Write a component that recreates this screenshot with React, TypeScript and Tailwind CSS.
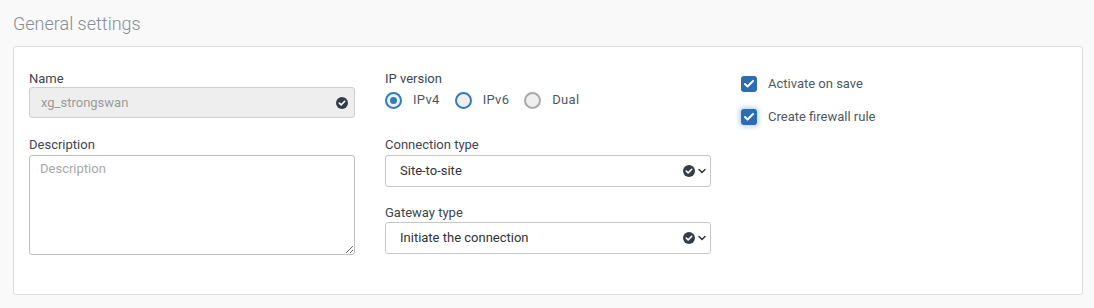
import { Check, ChevronDown } from 'lucide-react';

const font = { fontFamily: 'Roboto, "Liberation Sans", sans-serif' };

function CheckCircle() {
  return (
    <svg width="12" height="12" viewBox="0 0 12 12">
      <circle cx="6" cy="6" r="6" fill="#333d47" />
      <path d="M3.3 6.1 L5.2 7.9 L8.7 4.3" stroke="#fff" strokeWidth="1.6" fill="none" strokeLinecap="round" strokeLinejoin="round" />
    </svg>
  );
}

function Radio({ label, checked, focused }: { label: string; checked?: boolean; focused?: boolean }) {
  const ring = checked || focused ? 'border-[#2d7cc1]' : 'border-[#a9a9a9]';
  return (
    <label className="flex items-center gap-[11px] mr-[15px]">
      <span className={`w-[17px] h-[17px] rounded-full border-2 ${ring} bg-[#efefef] flex items-center justify-center`}>
        {checked && <span className="w-[7px] h-[7px] rounded-full bg-[#2d7cc1]" />}
      </span>
      <span className="text-[13px] tracking-[0.3px] text-[#4f5862]">{label}</span>
    </label>
  );
}

function Checkbox({ label, glow }: { label: string; glow?: boolean }) {
  return (
    <label className="flex items-center gap-[11px] h-[16px]">
      <span
        className={`w-[16px] h-[16px] rounded-[3px] bg-[#2a6db3] flex items-center justify-center ${glow ? 'shadow-[0_0_4px_2px_rgba(70,140,220,0.35)]' : ''}`}
      >
        <Check size={12} strokeWidth={4} color="#fff" />
      </span>
      <span className="text-[13px] text-[#4f5862]">{label}</span>
    </label>
  );
}

function Select({ value }: { value: string }) {
  return (
    <div className="h-[32px] w-full border border-[#c6c6c6] rounded-[3px] bg-white flex items-center pl-[14px] pr-[2px]">
      <span className="flex-1 text-[13px] text-[#333]">{value}</span>
      <CheckCircle />
      <ChevronDown size={12} strokeWidth={3.2} color="#333d47" className="ml-[1px]" />
    </div>
  );
}

export default function App() {
  return (
    <div className="w-[1094px] h-[308px] bg-[#f9f9f9] px-[13px] pt-[12px]" style={font}>
      <h2 className="text-[18px] leading-[24px] font-light text-[#868d95] mb-[10px]">General settings</h2>
      <div className="w-[1070px] bg-white border border-[#dcdcdc] rounded-[3px] pt-[23px] pb-[39px] px-[15px] flex gap-[30px]">
        <div className="w-[326px] flex flex-col">
          <div className="text-[13px] leading-[16px] text-[#3c4651] mt-[1px]">Name</div>
          <div className="h-[31px] bg-[#eeeeee] border border-[#cfcfcf] rounded-[3px] flex items-center pl-[11px] pr-[6px]">
            <span className="flex-1 text-[13px] text-[#9a9a9a]">xg_strongswan</span>
            <CheckCircle />
          </div>
          <div className="text-[13px] leading-[16px] text-[#3c4651] mt-[19px] mb-[2px]">Description</div>
          <textarea
            placeholder="Description"
            className="h-[100px] w-full border border-[#bdbdbd] rounded-[3px] px-[10px] py-[3px] text-[13px] outline-none placeholder:text-[#a8a8a8]"
            style={font}
          />
        </div>
        <div className="w-[326px] flex flex-col">
          <div className="text-[13px] leading-[16px] text-[#3c4651] mt-[1px]">IP version</div>
          <div className="flex items-center h-[20px] mt-[3px]">
            <Radio label="IPv4" checked />
            <Radio label="IPv6" focused />
            <Radio label="Dual" />
          </div>
          <div className="text-[13px] leading-[16px] text-[#3c4651] mt-[27px] mb-[2px]">Connection type</div>
          <Select value="Site-to-site" />
          <div className="text-[13px] leading-[16px] text-[#3c4651] mt-[18px] mb-[1px]">Gateway type</div>
          <Select value="Initiate the connection" />
        </div>
        <div className="flex flex-col gap-[17px] pt-[6px]">
          <Checkbox label="Activate on save" />
          <Checkbox label="Create firewall rule" glow />
        </div>
      </div>
    </div>
  );
}
